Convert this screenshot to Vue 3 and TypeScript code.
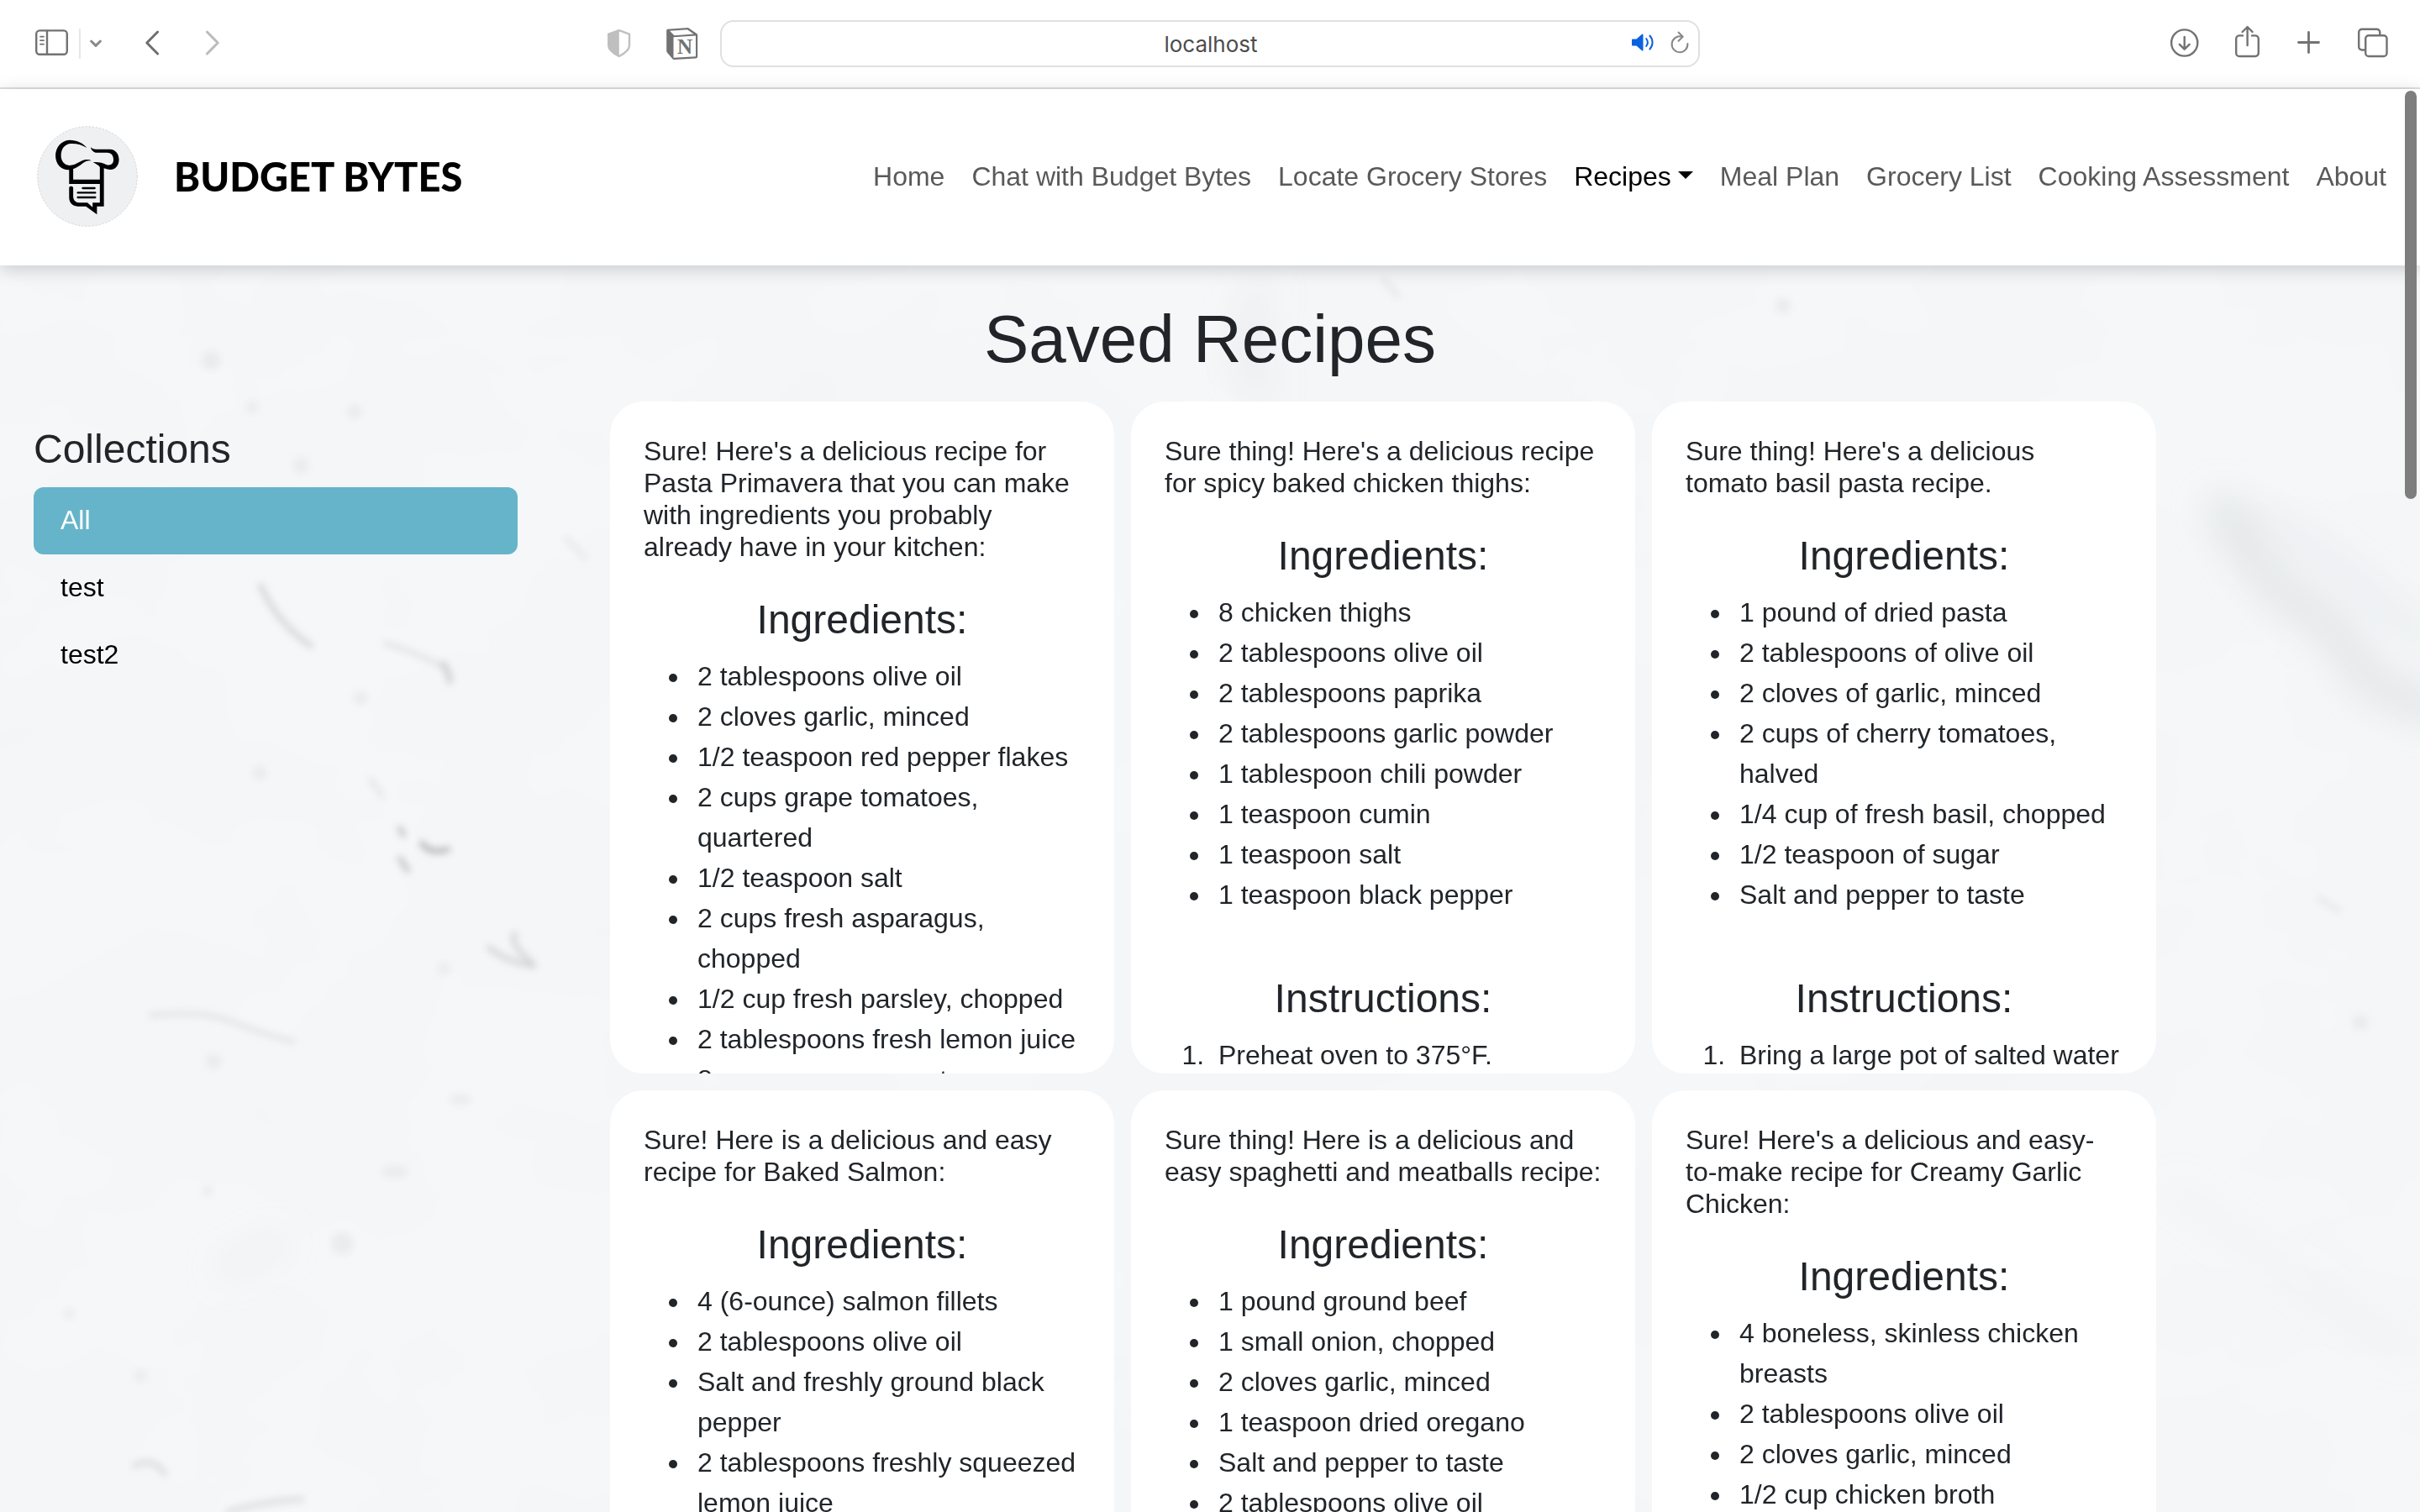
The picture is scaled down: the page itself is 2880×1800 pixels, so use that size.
<script setup lang="ts">
import { ref } from 'vue'

interface NavItem {
  label: string
  active?: boolean
}

interface Recipe {
  title: string
  ingredients: string[]
  instructions: string[]
}

const address = ref('localhost')

const navItems: NavItem[] = [
  { label: 'Home' },
  { label: 'Chat with Budget Bytes' },
  { label: 'Locate Grocery Stores' },
  { label: 'Recipes', active: true },
  { label: 'Meal Plan' },
  { label: 'Grocery List' },
  { label: 'Cooking Assessment' },
  { label: 'About' },
]

const collections = ['All', 'test', 'test2']
const selected = ref('All')

const recipes: Recipe[] = [
  {
    title:
      "Sure! Here's a delicious recipe for Pasta Primavera that you can make with ingredients you probably already have in your kitchen:",
    ingredients: [
      '2 tablespoons olive oil',
      '2 cloves garlic, minced',
      '1/2 teaspoon red pepper flakes',
      '2 cups grape tomatoes, quartered',
      '1/2 teaspoon salt',
      '2 cups fresh asparagus, chopped',
      '1/2 cup fresh parsley, chopped',
      '2 tablespoons fresh lemon juice',
      '8 ounces penne pasta',
    ],
    instructions: [],
  },
  {
    title: "Sure thing! Here's a delicious recipe for spicy baked chicken thighs:",
    ingredients: [
      '8 chicken thighs',
      '2 tablespoons olive oil',
      '2 tablespoons paprika',
      '2 tablespoons garlic powder',
      '1 tablespoon chili powder',
      '1 teaspoon cumin',
      '1 teaspoon salt',
      '1 teaspoon black pepper',
    ],
    instructions: ['Preheat oven to 375°F.'],
  },
  {
    title: "Sure thing! Here's a delicious tomato basil pasta recipe.",
    ingredients: [
      '1 pound of dried pasta',
      '2 tablespoons of olive oil',
      '2 cloves of garlic, minced',
      '2 cups of cherry tomatoes, halved',
      '1/4 cup of fresh basil, chopped',
      '1/2 teaspoon of sugar',
      'Salt and pepper to taste',
    ],
    instructions: ['Bring a large pot of salted water'],
  },
  {
    title: 'Sure! Here is a delicious and easy recipe for Baked Salmon:',
    ingredients: [
      '4 (6-ounce) salmon fillets',
      '2 tablespoons olive oil',
      'Salt and freshly ground black pepper',
      '2 tablespoons freshly squeezed lemon juice',
    ],
    instructions: [],
  },
  {
    title: 'Sure thing! Here is a delicious and easy spaghetti and meatballs recipe:',
    ingredients: [
      '1 pound ground beef',
      '1 small onion, chopped',
      '2 cloves garlic, minced',
      '1 teaspoon dried oregano',
      'Salt and pepper to taste',
      '2 tablespoons olive oil',
    ],
    instructions: [],
  },
  {
    title: "Sure! Here's a delicious and easy-to-make recipe for Creamy Garlic Chicken:",
    ingredients: [
      '4 boneless, skinless chicken breasts',
      '2 tablespoons olive oil',
      '2 cloves garlic, minced',
      '1/2 cup chicken broth',
    ],
    instructions: [],
  },
]
</script>

<template>
  <div class="window">
    <header class="toolbar">
      <div class="tools">
        <button class="tool" type="button" aria-label="Sidebar">
          <svg width="40" height="44" viewBox="0 0 40 44" fill="none" stroke="#727272" stroke-width="2.4" stroke-linecap="round">
            <rect x="1.2" y="6.4" width="36.6" height="28.4" rx="4" />
            <path d="M14 7v27" />
            <path d="M6 13.6h4M6 18.2h4M6 22.6h4" stroke-width="1.8" />
          </svg>
        </button>
        <span class="divider"></span>
        <button class="tool" type="button" aria-label="Tab groups">
          <svg width="16" height="44" viewBox="0 0 16 44" fill="none" stroke="#8a8a8c" stroke-width="3" stroke-linecap="round" stroke-linejoin="round">
            <path d="M2.6 19l5.4 5.4L13.4 19" />
          </svg>
        </button>
        <button class="tool back" type="button" aria-label="Back">
          <svg width="18" height="44" viewBox="0 0 18 44" fill="none" stroke="#6f6f6f" stroke-width="3" stroke-linecap="round" stroke-linejoin="round">
            <path d="M15.6 8L2.8 21l12.8 13" />
          </svg>
        </button>
        <button class="tool forward" type="button" aria-label="Forward">
          <svg width="18" height="44" viewBox="0 0 18 44" fill="none" stroke="#bcbcbc" stroke-width="3" stroke-linecap="round" stroke-linejoin="round">
            <path d="M2.4 8l12.8 13-12.8 13" />
          </svg>
        </button>
        <button class="tool shield" type="button" aria-label="Privacy report">
          <svg width="30" height="44" viewBox="0 0 30 44">
            <path d="M14.8 6.2L27 10.6V24c0 5.5-5.5 9.5-12.2 13C8 33.5 2.2 29.5 2.2 24V10.6z" fill="none" stroke="#bfbfbf" stroke-width="2.4" stroke-linejoin="round" />
            <path d="M14.8 5.5v32C8 34 1.5 30 1.5 24V10z" fill="#bfbfbf" />
          </svg>
        </button>
        <button class="tool notion" type="button" aria-label="Notion">
          <svg width="40" height="44" viewBox="0 0 40 44">
            <path d="M2 4.8L27 3l10.5 7.2c.5.4.7.8.7 1.5V37c0 1.5-.8 2.3-2.2 2.4L10.5 41c-1 0-1.5-.3-2.2-1.1L2.3 33c-.8-1-1.1-1.500-1.1-2.7V7c0-1.200.3-1.900.8-2.200z" fill="#727272" />
            <path d="M5 6.8l21-1.5 7.5 5.3-23 1.6z" fill="#fff" />
            <path d="M9.5 14.2L36 12.6v24.6L9.5 38.800z" fill="#fff" />
            <text x="23" y="34" class="notion-letter" text-anchor="middle">N</text>
          </svg>
        </button>
      </div>

      <div class="address">
        <input v-model="address" type="text" aria-label="Address" />
        <div class="address-icons">
          <button class="tool" type="button" aria-label="Mute tab">
            <svg width="28" height="28" viewBox="0 0 28 28" fill="none" stroke="#0a62e0" stroke-width="2" stroke-linecap="round">
              <path d="M2 9.5h4.5L13 3.800c.7-.6 1.5-.2 1.5.7v18c0 .9-.8 1.3-1.5.7l-6.500-5.700H2c-.7 0-1-.4-1-1v-6c0-.6.3-1 1-1z" fill="#0a62e0" stroke="none" />
              <path d="M18.2 9c2 2.7 2 6.3 0 9M22.4 5.5c4.2 4.6 4.2 11.4 0 16" />
            </svg>
          </button>
          <button class="tool" type="button" aria-label="Reload">
            <svg width="24" height="28" viewBox="0 0 24 28" fill="none" stroke="#868686" stroke-width="2" stroke-linecap="round" stroke-linejoin="round">
              <path d="M13.500 6.500A9.400 9.400 0 1 0 21.400 15" />
              <path d="M10.500 1.500l5.200 5.200-5.200 5" />
            </svg>
          </button>
        </div>
      </div>

      <div class="tools tools-end">
        <button class="tool" type="button" aria-label="Downloads">
          <svg width="36" height="44" viewBox="0 0 36 44" fill="none" stroke="#727272" stroke-width="2.4" stroke-linecap="round" stroke-linejoin="round">
            <circle cx="17.7" cy="21" r="15.6" />
            <path d="M17.700 14v14.500M11.800 22.800l5.900 5.900 5.900-5.900" />
          </svg>
        </button>
        <button class="tool" type="button" aria-label="Share">
          <svg width="30" height="44" viewBox="0 0 30 44" fill="none" stroke="#727272" stroke-width="2.4" stroke-linecap="round" stroke-linejoin="round">
            <path d="M9 12.400H5a3.800 3.800 0 0 0-3.800 3.800v17a3.800 3.800 0 0 0 3.800 3.800h19a3.800 3.800 0 0 0 3.800-3.800v-17a3.800 3.800 0 0 0-3.800-3.800h-4" />
            <path d="M14.600 24V2.500M8.600 8l6-6 6 6" />
          </svg>
        </button>
        <button class="tool" type="button" aria-label="New tab">
          <svg width="30" height="44" viewBox="0 0 30 44" fill="none" stroke="#727272" stroke-width="2.8" stroke-linecap="round">
            <path d="M15.500 8.500v24M3.500 20.500h24" />
          </svg>
        </button>
        <button class="tool" type="button" aria-label="Tab overview">
          <svg width="40" height="44" viewBox="0 0 40 44" fill="none" stroke="#727272" stroke-width="2.4">
            <path d="M11 29.500H7A3.800 3.800 0 0 1 3.200 25.700V8.500A3.800 3.800 0 0 1 7 4.700h17.500A3.800 3.800 0 0 1 28.300 8.500V12" />
            <rect x="11.2" y="12.3" width="25.3" height="24.7" rx="3.8" />
          </svg>
        </button>
      </div>
    </header>

    <nav class="navbar">
      <a class="brand" href="#">
        <svg width="120" height="120" viewBox="43 60 348 360" preserveAspectRatio="none" aria-hidden="true">
          <ellipse cx="217" cy="240" rx="172" ry="178" fill="#eff0f2" stroke="#c4c6ca" stroke-width="2" stroke-dasharray="7 5" />
          <path d="M215 138C205 122 180 110 155 110C125 112 107 138 107 166C107 195 125 217 153 217C180 215 195 195 212 186C220 184 226 184 231 184C225 180 215 179 207 181C188 186 180 200 155 201C138 200 126 186 126 166C126 140 140 124 160 123C180 122 200 128 215 138Z" />
          <path d="M228 136C234 142 240 144 252 143L295 143C314 143 326 160 326 180C326 202 312 216 296 216C288 216 280 213 274 211L274 347L250 347L250 376L212 347L183 347C165 346 154 333 154 315L154 280C155 274 166 274 168 280L168 313C169 326 176 333 188 334L217 334L235 350L235 334L260 334L260 267L154 267L154 213L168 213L168 251L260 251L260 207C255 198 245 195 236 189C255 188 270 190 282 198C296 203 307 196 307 181C307 163 298 155 285 155L245 155C236 152 230 146 228 136Z" />
          <path d="M201 282H242M184 298H244M184 315H244" stroke="#000" stroke-width="7" stroke-linecap="round" />
        </svg>
        <span>BUDGET BYTES</span>
      </a>
      <ul class="links">
        <li v-for="item in navItems" :key="item.label">
          <a href="#" :class="{ active: item.active }">{{ item.label }}</a>
        </li>
      </ul>
    </nav>

    <main class="page">
      <svg class="marble" viewBox="0 316 2880 1484" preserveAspectRatio="xMidYMin slice" aria-hidden="true">
        <defs>
          <filter id="mottle" x="0" y="0" width="100%" height="100%">
            <feTurbulence type="fractalNoise" baseFrequency="0.004 0.005" numOctaves="4" seed="8" />
            <feColorMatrix values="0 0 0 0 .9  0 0 0 0 .91  0 0 0 0 .92  1.4 0 0 0 -.45" />
          </filter>
          <filter id="soft" x="-50%" y="-50%" width="200%" height="200%">
            <feGaussianBlur stdDeviation="4" />
          </filter>
          <filter id="cloud" x="-50%" y="-50%" width="200%" height="200%">
            <feGaussianBlur stdDeviation="20" />
          </filter>
        </defs>
        <rect x="0" y="316" width="2880" height="1484" fill="#f5f7f9" />
        <rect x="0" y="316" width="2880" height="1484" filter="url(#mottle)" />
        <g filter="url(#cloud)" fill="none" stroke="#dcdee0" stroke-linecap="round">
          <path d="M2647 614Q2700 700 2740 722T2800 784T2890 840" stroke-width="36" opacity=".7" />
          <path d="M2640 600Q2760 640 2880 760" stroke-width="30" opacity=".3" />
          <path d="M1500 350Q1470 400 1500 460" stroke-width="30" opacity=".35" />
          <path d="M2590 1420Q2700 1500 2860 1610" stroke-width="26" opacity=".15" />
          <path d="M270 1510L330 1480" stroke-width="26" opacity=".25" />
        </g>
        <g filter="url(#soft)" fill="none" stroke="#dadcde" stroke-width="6" stroke-linecap="round">
          <path d="M310 697Q330 742 370 769" stroke="#d2d5d7" />
          <path d="M459 766Q510 782 533 798" opacity=".7" />
          <path d="M527 790Q535 800 535 811" stroke="#c8cacd" />
          <path d="M441 928L455 948" opacity=".6" />
          <path d="M502 1004Q512 1018 533 1011" stroke="#b0b2b5" />
          <path d="M476 1022L485 1036M476 986L480 994" stroke="#bfc1c3" />
          <path d="M582 1128Q600 1144 635 1150M613 1112Q604 1122 635 1148" stroke="#d2d4d6" />
          <path d="M179 1209Q240 1202 275 1216T349 1240" stroke-width="4" />
          <path d="M160 1745Q182 1734 196 1754M271 1800Q320 1786 359 1785" />
          <path d="M674 641L696 664M1647 333L1663 352M2760 1070L2784 1084" opacity=".5" />
        </g>
        <g filter="url(#soft)" fill="#e2e4e6" opacity=".6">
          <circle cx="300" cy="485" r="7" />
          <circle cx="358" cy="554" r="9" />
          <circle cx="251" cy="429" r="11" />
          <circle cx="422" cy="490" r="8" />
          <circle cx="429" cy="831" r="8" />
          <circle cx="309" cy="920" r="8" />
          <circle cx="528" cy="1153" r="7" />
          <circle cx="254" cy="1263" r="9" />
          <ellipse cx="548" cy="1309" rx="13" ry="6" />
          <ellipse cx="470" cy="1395" rx="15" ry="7" />
          <circle cx="247" cy="1418" r="6" />
          <circle cx="407" cy="1480" r="13" />
          <circle cx="167" cy="1638" r="7" />
          <circle cx="82" cy="1564" r="6" />
          <circle cx="2122" cy="364" r="9" />
          <circle cx="2809" cy="1217" r="9" />
        </g>
      </svg>

      <h1>Saved Recipes</h1>
      <div class="content">
        <aside class="sidebar">
          <h2>Collections</h2>
          <button
            v-for="name in collections"
            :key="name"
            type="button"
            class="collection"
            :class="{ selected: name === selected }"
            @click="selected = name"
          >
            {{ name }}
          </button>
        </aside>
        <section class="cards">
          <article v-for="recipe in recipes" :key="recipe.title" class="card">
            <p>{{ recipe.title }}</p>
            <h2>Ingredients:</h2>
            <ul>
              <li v-for="line in recipe.ingredients" :key="line">{{ line }}</li>
            </ul>
            <template v-if="recipe.instructions.length">
              <h2>Instructions:</h2>
              <ol>
                <li v-for="line in recipe.instructions" :key="line">{{ line }}</li>
              </ol>
            </template>
          </article>
        </section>
      </div>
    </main>
    <div class="scroll-thumb"></div>
  </div>
</template>

<style>
body {
  margin: 0;
}
</style>

<style scoped>
.window {
  position: relative;
  display: flex;
  flex-direction: column;
  height: 100vh;
  overflow: hidden;
  background: #fff;
  color: #212529;
  font-family: 'Liberation Sans', Arial, sans-serif;
  font-size: 32px;
  line-height: 48px;
}

button {
  padding: 0;
  border: 0;
  background: none;
  color: inherit;
  font: inherit;
  text-align: left;
}

svg {
  display: block;
}

h1,
h2,
p,
ul,
ol {
  margin: 0;
  padding: 0;
  font-weight: 400;
}

.toolbar {
  flex: none;
  display: grid;
  grid-template-columns: 1fr minmax(0, 1166px) 1fr;
  align-items: center;
  height: 104px;
  border-bottom: 2px solid #dfdfdf;
}

.tools {
  display: flex;
  align-items: center;
  padding-left: 42px;
}

.divider {
  width: 2px;
  height: 36px;
  margin: 0 10px 0 12px;
  background: #e8e8e8;
}

.back {
  margin-left: 50px;
}

.forward {
  margin-left: 54px;
}

.shield {
  margin-left: auto;
}

.notion {
  margin: 0 25px 0 40px;
}

.notion-letter {
  fill: #727272;
  font: 700 25px 'Liberation Serif', serif;
}

.tools-end {
  justify-content: flex-end;
  gap: 42px;
  padding: 0 36px 0 0;
}

.address {
  position: relative;
}

.address input {
  display: block;
  box-sizing: border-box;
  width: 100%;
  height: 56px;
  padding: 0 80px 0 82px;
  border: 2px solid #e0e0e0;
  border-radius: 16px;
  background: #fff;
  color: #4c4c4c;
  font: 26px Inter, sans-serif;
  text-align: center;
}

.address-icons {
  position: absolute;
  top: 13px;
  right: 12px;
  display: flex;
  gap: 18px;
}

.navbar {
  position: relative;
  z-index: 1;
  box-sizing: border-box;
  flex: none;
  display: flex;
  align-items: center;
  justify-content: space-between;
  height: 210px;
  padding: 0 40px 2px 44px;
  box-shadow: 0 4px 20px rgba(0, 0, 0, 0.18);
  background: #fff;
}

.brand {
  display: flex;
  align-items: center;
  gap: 43px;
  color: #000;
  font: 900 47px/58px Lato, sans-serif;
  text-decoration: none;
}

.links {
  display: flex;
  gap: 32px;
  list-style: none;
}

.links a {
  color: #595959;
  text-decoration: none;
}

.links .active {
  color: #000;
}

.links .active::after {
  content: '';
  display: inline-block;
  margin-left: 8px;
  border: 9px solid transparent;
  border-top-color: #000;
  border-bottom: 0;
  vertical-align: 8px;
}

.page {
  position: relative;
  flex: 1;
  min-height: 0;
  padding: 40px 40px 0;
}

.marble {
  position: absolute;
  inset: 0;
  width: 100%;
  height: 100%;
}

h1 {
  position: relative;
  margin-bottom: 26px;
  font-size: 80px;
  line-height: 96px;
  text-align: center;
}

h2 {
  margin-bottom: 16px;
  font-size: 48px;
  line-height: 58px;
}

.content {
  position: relative;
  display: flex;
  gap: 110px;
}

.sidebar {
  flex: none;
  width: 20vw;
  padding-top: 28px;
}

.collection {
  display: block;
  width: 100%;
  padding: 15px 32px 17px;
  border-radius: 12px;
  color: #000;
}

.selected {
  background: #66b4ca;
  color: #fff;
}

.cards {
  flex: 1;
  display: grid;
  grid-template-columns: repeat(3, minmax(0, 1fr));
  grid-auto-rows: 800px;
  gap: 20px;
  max-width: 1840px;
}

.card {
  box-sizing: border-box;
  overflow: hidden;
  padding: 40px;
  border-radius: 40px;
  background: #fff;
}

.card p {
  margin-bottom: 39px;
  line-height: 38px;
}

.card h2 {
  margin-bottom: 14px;
  text-align: center;
}

.card ul,
.card ol {
  margin-bottom: 71px;
  padding-left: 56px;
}

.card li {
  padding-left: 8px;
}

.scroll-thumb {
  position: absolute;
  z-index: 2;
  top: 108px;
  right: 4px;
  width: 14px;
  height: 486px;
  border-radius: 7px;
  background: #7e7e7e;
}
</style>
